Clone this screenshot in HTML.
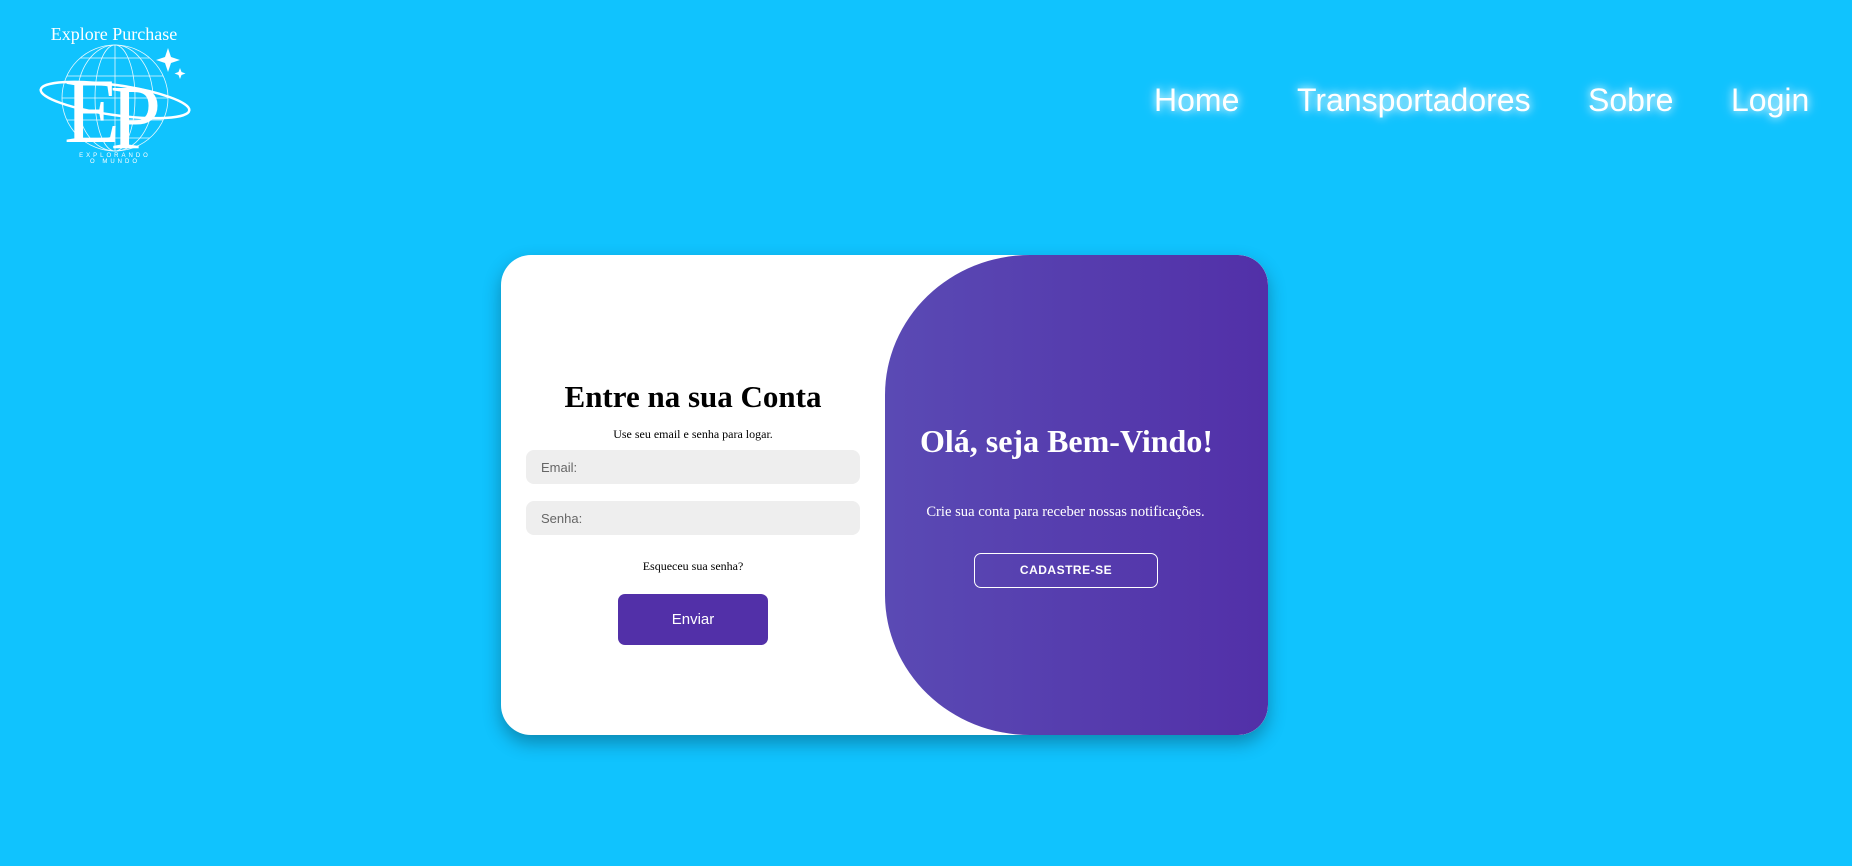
<!DOCTYPE html>
<html><head><meta charset="utf-8"><style>
*{margin:0;padding:0;box-sizing:border-box}
body{width:1852px;height:866px;background:#10c3fe;position:relative;overflow:hidden;font-family:"Liberation Serif",serif}
.nav a{position:absolute;top:80px;font-family:"Liberation Sans",sans-serif;font-size:32px;color:#fff;text-decoration:none;text-shadow:0 0 8px rgba(255,255,255,.9),0 0 14px rgba(255,255,255,.6);line-height:40px}
.card{position:absolute;left:501px;top:255px;width:767px;height:480px;background:#fff;border-radius:30px;box-shadow:0 8px 18px rgba(0,0,0,.3);overflow:hidden}
.panel{position:absolute;left:384px;top:0;width:383px;height:480px;background:linear-gradient(90deg,#5a4ab4,#5230a8);border-radius:145px 30px 30px 145px / 140px 30px 30px 140px}
.c{position:absolute;text-align:center}
.inp{position:absolute;left:25px;width:334px;height:34px;background:#eee;border-radius:8px;font-family:"Liberation Sans",sans-serif;font-size:13px;color:#666;padding:10px 15px}
</style></head><body>
<svg style="position:absolute;left:30px;top:20px" width="170" height="150" viewBox="0 0 170 150">
<text x="84" y="20" text-anchor="middle" fill="#fff" font-family="Liberation Serif" font-size="18">Explore Purchase</text>
<g fill="none" stroke="#fff" stroke-width="0.8" opacity="0.9">
<circle cx="85" cy="78" r="53"/>
<ellipse cx="85" cy="78" rx="20" ry="53"/><ellipse cx="85" cy="78" rx="38" ry="53"/>
<line x1="32" y1="78" x2="138" y2="78"/><line x1="37" y1="56" x2="133" y2="56"/><line x1="37" y1="100" x2="133" y2="100"/>
<line x1="50" y1="38" x2="120" y2="38"/><line x1="50" y1="118" x2="120" y2="118"/><line x1="85" y1="25" x2="85" y2="131"/>
</g>
<ellipse cx="85" cy="80" rx="75" ry="15" fill="none" stroke="#fff" stroke-width="2.5" transform="rotate(8 85 80)"/>
<text x="34" y="122" fill="#fff" font-family="Liberation Serif" font-size="92">E</text>
<text x="80" y="128" fill="#fff" font-family="Liberation Serif" font-size="92">P</text>
<path d="M138 28 l3 9 9 3 -9 3 -3 9 -3 -9 -9 -3 9 -3z" fill="#fff"/>
<path d="M150 48 l1.5 4 4 1.5 -4 1.5 -1.5 4 -1.5 -4 -4 -1.5 4 -1.5z" fill="#fff"/>
<text x="85" y="137" text-anchor="middle" fill="#fff" font-family="Liberation Sans" font-size="6" letter-spacing="3">EXPLORANDO</text>
<text x="85" y="143" text-anchor="middle" fill="#fff" font-family="Liberation Sans" font-size="6" letter-spacing="3">O MUNDO</text>
</svg>
<div class="nav"><a style="left:1154px">Home</a><a style="left:1297px">Transportadores</a><a style="left:1588px">Sobre</a><a style="left:1731px">Login</a></div>
<div class="card">
<div class="c" style="left:0;width:384px;top:124px;font-size:31px;font-weight:bold">Entre na sua Conta</div>
<div class="c" style="left:0;width:384px;top:172px;font-size:12px">Use seu email e senha para logar.</div>
<div class="inp" style="top:195px">Email:</div>
<div class="inp" style="top:246px">Senha:</div>
<div class="c" style="left:0;width:384px;top:304px;font-size:12px">Esqueceu sua senha?</div>
<div class="c" style="left:117px;width:150px;top:339px;height:51px;background:#5230a8;border-radius:7px;color:#fff;font-family:'Liberation Sans',sans-serif;font-size:15px;line-height:51px">Enviar</div>
<div class="panel">
<div class="c" style="left:-10px;width:383px;top:168px;color:#fff;font-size:32px;font-weight:bold">Olá, seja Bem-Vindo!</div>
<div class="c" style="left:-11px;width:383px;top:249px;color:#fff;font-size:14.6px">Crie sua conta para receber nossas notificações.</div>
<div class="c" style="left:89px;width:184px;top:298px;height:35px;border:1px solid #fff;border-radius:7px;color:#fff;font-family:'Liberation Sans',sans-serif;font-weight:bold;font-size:12px;line-height:33px;letter-spacing:.5px">CADASTRE-SE</div>
</div>
</div>
</body></html>
